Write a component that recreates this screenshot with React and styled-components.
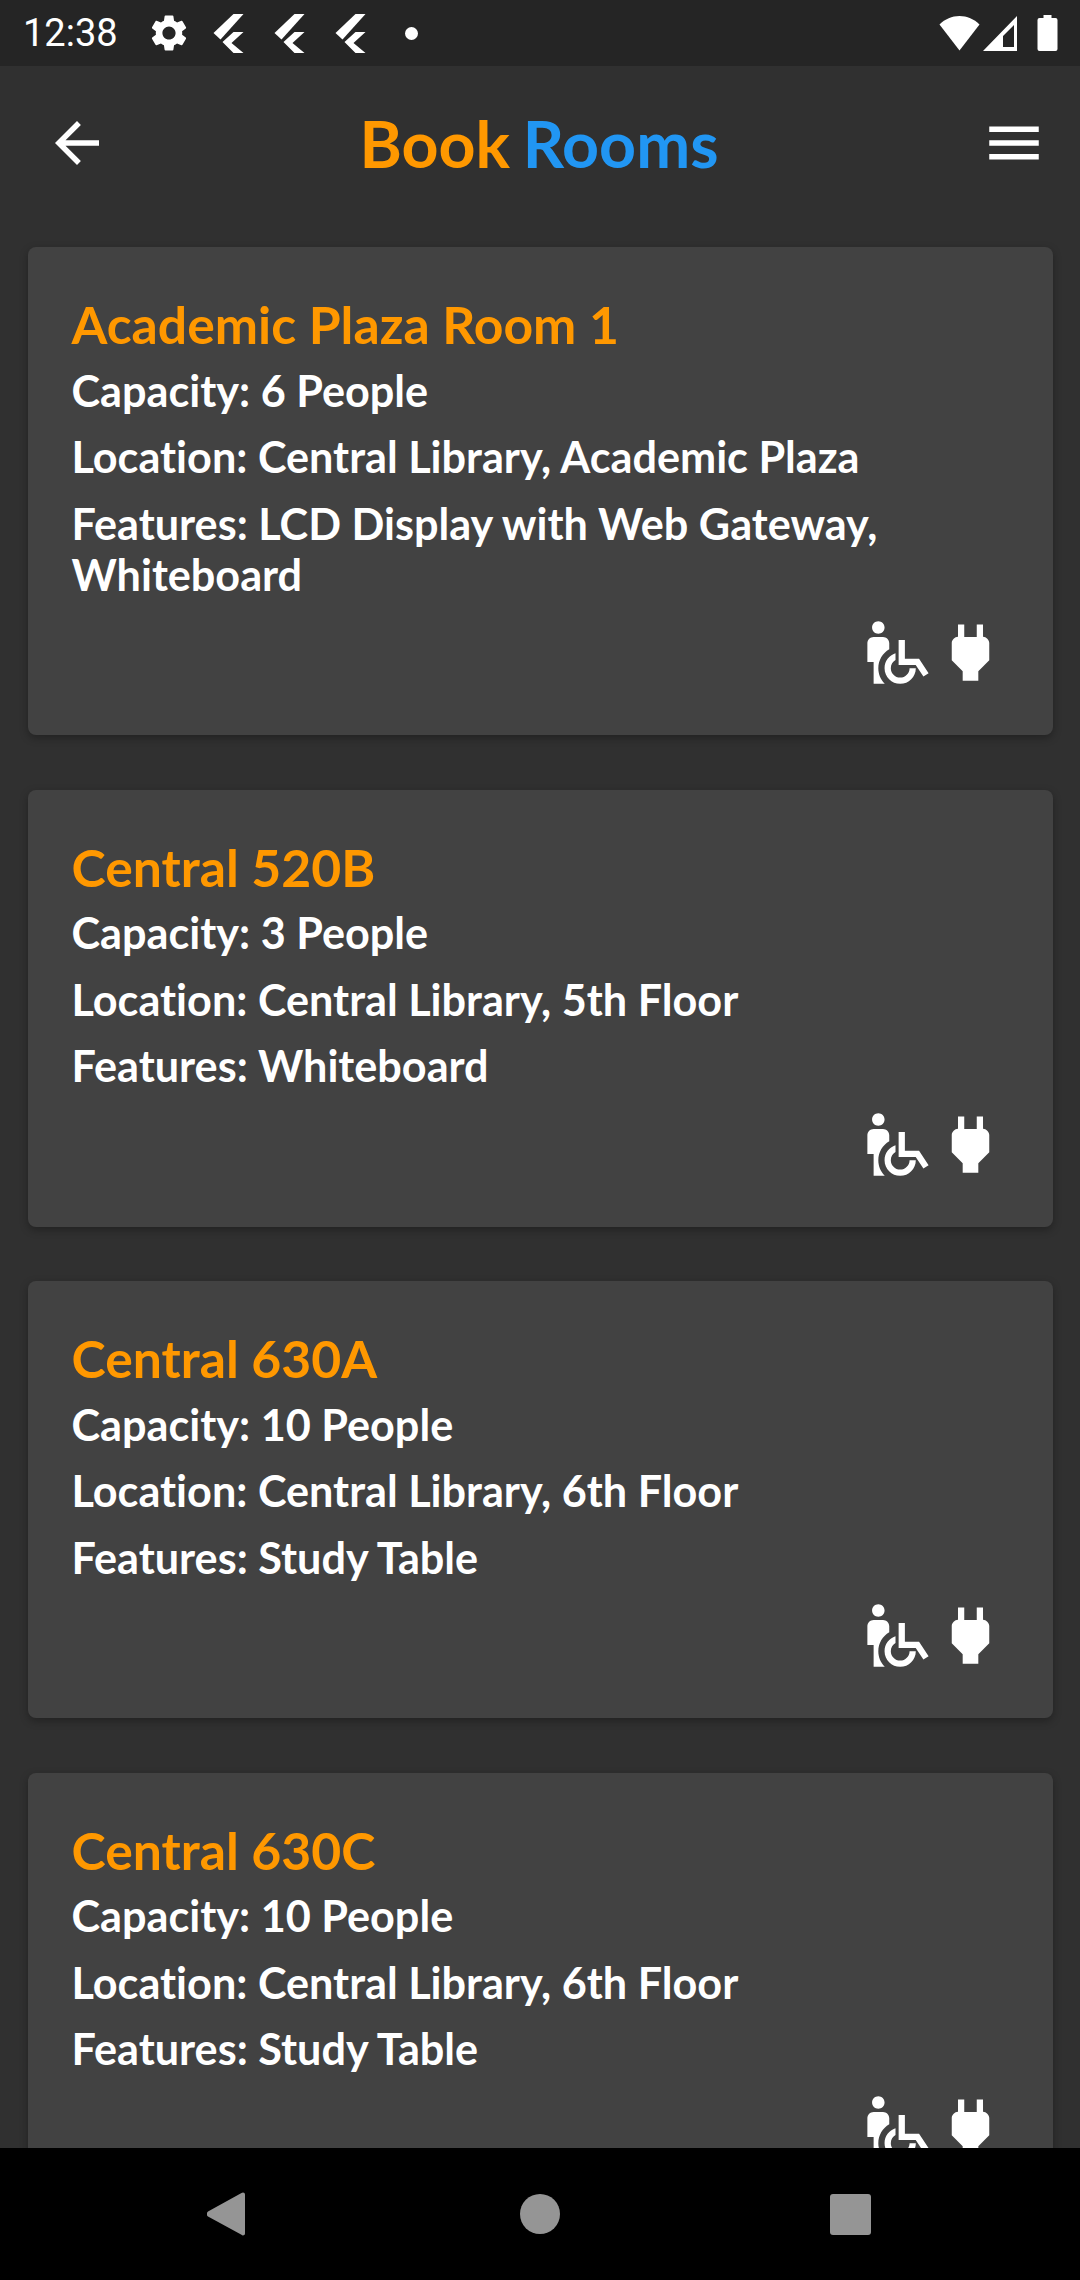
import React from 'react';
import styled, { createGlobalStyle } from 'styled-components';
import { MdSettings, MdArrowBack, MdMenu, MdWheelchairPickup, MdPower } from 'react-icons/md';

const Global = createGlobalStyle`
html, body {
    margin: 0;
    padding: 0;
    background: #303030;
}
`

const Screen = styled.div`
width: 1080px;
height: 2280px;
display: flex;
flex-direction: column;
overflow: hidden;
background: #303030;
font-family: Lato, sans-serif;
font-variant-ligatures: none;
`
const StatusBar = styled.div`
height: 66px;
flex: none;
background: #252525;
display: flex;
align-items: center;
justify-content: space-between;
padding: 0 22px 0 23px;
color: #fff;
`
const StatusLeft = styled.div`
display: flex;
align-items: center;
`
const Clock = styled.span`
font-family: Roboto, sans-serif;
font-size: 38px;
font-weight: 400;
margin-right: 29px;
`
const FlutterMark = styled.svg`
width: 31px;
height: 39px;
margin-left: ${props => props.$first ? '22px' : '30px'};
fill: #fff;
`
const Dot = styled.span`
width: 13px;
height: 13px;
border-radius: 50%;
background: #fff;
margin-left: 39px;
`
const StatusRight = styled.div`
display: flex;
align-items: center;
`
const StatusIcon = styled.svg`
fill: #fff;
margin-left: ${props => props.$gap || 0}px;
`
const AppBar = styled.div`
height: 154px;
flex: none;
display: flex;
align-items: center;
justify-content: space-between;
padding: 0 33px 0 44px;
color: #fff;
`
const Title = styled.h1`
margin: 0 13px 0 0;
font-size: 64.5px;
font-weight: 700;
word-spacing: -3px;
color: #ff9800;
`
const Blue = styled.span`
color: #2196f3;
`
const List = styled.div`
flex: 1;
min-height: 0;
overflow: hidden;
display: flex;
flex-direction: column;
gap: 54.5px;
padding: 27px 27.5px 0;
`
const Card = styled.div`
flex: none;
background: #424242;
border-radius: 8px;
padding: 47px 45px 45px 44px;
box-shadow: 0 3px 8px rgba(0, 0, 0, 0.3);
`
const RoomName = styled.div`
font-size: 51.7px;
font-weight: 700;
line-height: 60px;
color: #ff9800;
margin-bottom: 10.5px;
`
const Info = styled.div`
font-size: 43.2px;
font-weight: 700;
line-height: 51px;
color: #fff;
margin-bottom: 15.5px;
`
const Icons = styled.div`
display: flex;
justify-content: flex-end;
color: #fff;
margin-top: 4px;
`
const NavBar = styled.div`
height: 132px;
flex: none;
background: #000;
display: flex;
align-items: center;
padding-left: 207px;
`
const NavIcon = styled.svg`
fill: #959595;
margin-left: ${props => props.$gap || 0}px;
`

const Flutter = ({ first }) => (
    <FlutterMark $first={first} viewBox="0 0 30 39">
        <path d="M20 0h10L7 25.500 0 19z" />
        <path d="M20 18h10L18 29l12 10H20L9 28z" />
    </FlutterMark>
)

const rooms = [
    { name: 'Academic Plaza Room 1', capacity: '6 People', location: 'Central Library, Academic Plaza', features: 'LCD Display with Web Gateway, Whiteboard' },
    { name: 'Central 520B', capacity: '3 People', location: 'Central Library, 5th Floor', features: 'Whiteboard' },
    { name: 'Central 630A', capacity: '10 People', location: 'Central Library, 6th Floor', features: 'Study Table' },
    { name: 'Central 630C', capacity: '10 People', location: 'Central Library, 6th Floor', features: 'Study Table' },
]

export default function App() {
    return (
        <Screen>
            <Global />
            <StatusBar>
                <StatusLeft>
                    <Clock>12:38</Clock>
                    <MdSettings size={44} />
                    <Flutter first />
                    <Flutter />
                    <Flutter />
                    <Dot />
                </StatusLeft>
                <StatusRight>
                    <StatusIcon width="41" height="36" viewBox="0 0 40 36">
                        <path d="M0 9.500C5.500 4 12.500 1 20 1s14.500 3 20 8.500L20 35.500z" />
                    </StatusIcon>
                    <StatusIcon $gap={3} width="34" height="36" viewBox="0 0 34 36">
                        <path d="M34 1v35H0zM31 10 20 21v11h11z" fillRule="evenodd" />
                    </StatusIcon>
                    <StatusIcon $gap={20} width="21" height="36" viewBox="0 0 20 36">
                        <path d="M6 0h8v3h4a2 2 0 0 1 2 2v29a2 2 0 0 1-2 2H2a2 2 0 0 1-2-2V5a2 2 0 0 1 2-2h4z" />
                    </StatusIcon>
                </StatusRight>
            </StatusBar>
            <AppBar>
                <MdArrowBack size={66} />
                <Title>Book <Blue>Rooms</Blue></Title>
                <MdMenu size={66} />
            </AppBar>
            <List>
                {rooms.map((room, i) => (
                    <Card key={i}>
                        <RoomName>{room.name}</RoomName>
                        <Info>Capacity: {room.capacity}</Info>
                        <Info>Location: {room.location}</Info>
                        <Info>Features: {room.features}</Info>
                        <Icons>
                            <MdWheelchairPickup size={75} />
                            <MdPower size={75} />
                        </Icons>
                    </Card>
                ))}
            </List>
            <NavBar>
                <NavIcon width="38" height="44" viewBox="0 0 38 44">
                    <path d="M36 .500a2 2 0 0 1 2 2v39a2 2 0 0 1-3.500 1.300L1 24.500a3.500 3.500 0 0 1 0-5L34.500 1z" />
                </NavIcon>
                <NavIcon $gap={275} width="40" height="40" viewBox="0 0 40 40">
                    <circle cx="20" cy="20" r="20" />
                </NavIcon>
                <NavIcon $gap={270} width="41" height="41" viewBox="0 0 41 41">
                    <rect width="41" height="41" rx="3" />
                </NavIcon>
            </NavBar>
        </Screen>
    );
}
